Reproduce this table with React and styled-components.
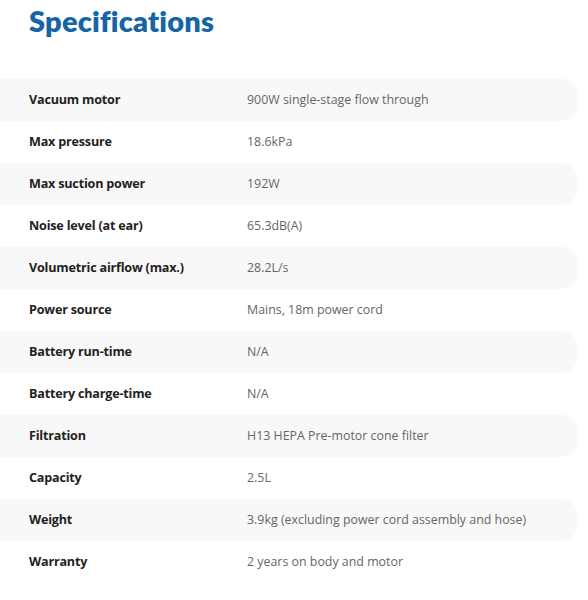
import React from "react";
import styled, { createGlobalStyle } from "styled-components";

const GlobalStyle = createGlobalStyle`
  body {
    margin: 0;
    background: #ffffff;
    font-family: "Open Sans", "Liberation Sans", sans-serif;
  }
`;

const Page = styled.section`
  width: 577px;
  padding-top: 3px;
`;

const Title = styled.h2`
  margin: 0 0 40px 29px;
  font-family: "Lato", "Noto Sans", sans-serif;
  font-weight: 800;
  font-size: 29px;
  line-height: 36px;
  letter-spacing: 0.2px;
  color: #1565a6;
`;

const Table = styled.div`
  display: flex;
  flex-direction: column;
`;

const Row = styled.div`
  display: grid;
  grid-template-columns: 218px 1fr;
  align-items: center;
  height: 42px;
  padding-left: 29px;
  padding-bottom: 2px;
  box-sizing: border-box;
  background: ${(p) => (p.$shaded ? "#f8f8f8" : "transparent")};
  border-radius: 0 15px 15px 0;
`;

const Label = styled.div`
  font-size: 12.6px;
  font-weight: 700;
  letter-spacing: -0.2px;
  color: #222;
`;

const Value = styled.div`
  font-size: 12.4px;
  font-weight: 400;
  color: #666;
`;

const specs = [
  ["Vacuum motor", "900W single-stage flow through"],
  ["Max pressure", "18.6kPa"],
  ["Max suction power", "192W"],
  ["Noise level (at ear)", "65.3dB(A)"],
  ["Volumetric airflow (max.)", "28.2L/s"],
  ["Power source", "Mains, 18m power cord"],
  ["Battery run-time", "N/A"],
  ["Battery charge-time", "N/A"],
  ["Filtration", "H13 HEPA Pre-motor cone filter"],
  ["Capacity", "2.5L"],
  ["Weight", "3.9kg (excluding power cord assembly and hose)"],
  ["Warranty", "2 years on body and motor"],
];

export default function App() {
  return (
    <>
      <GlobalStyle />
      <Page>
        <Title>Specifications</Title>
        <Table>
          {specs.map(([label, value], i) => (
            <Row key={label} $shaded={i % 2 === 0}>
              <Label>{label}</Label>
              <Value>{value}</Value>
            </Row>
          ))}
        </Table>
      </Page>
    </>
  );
}
